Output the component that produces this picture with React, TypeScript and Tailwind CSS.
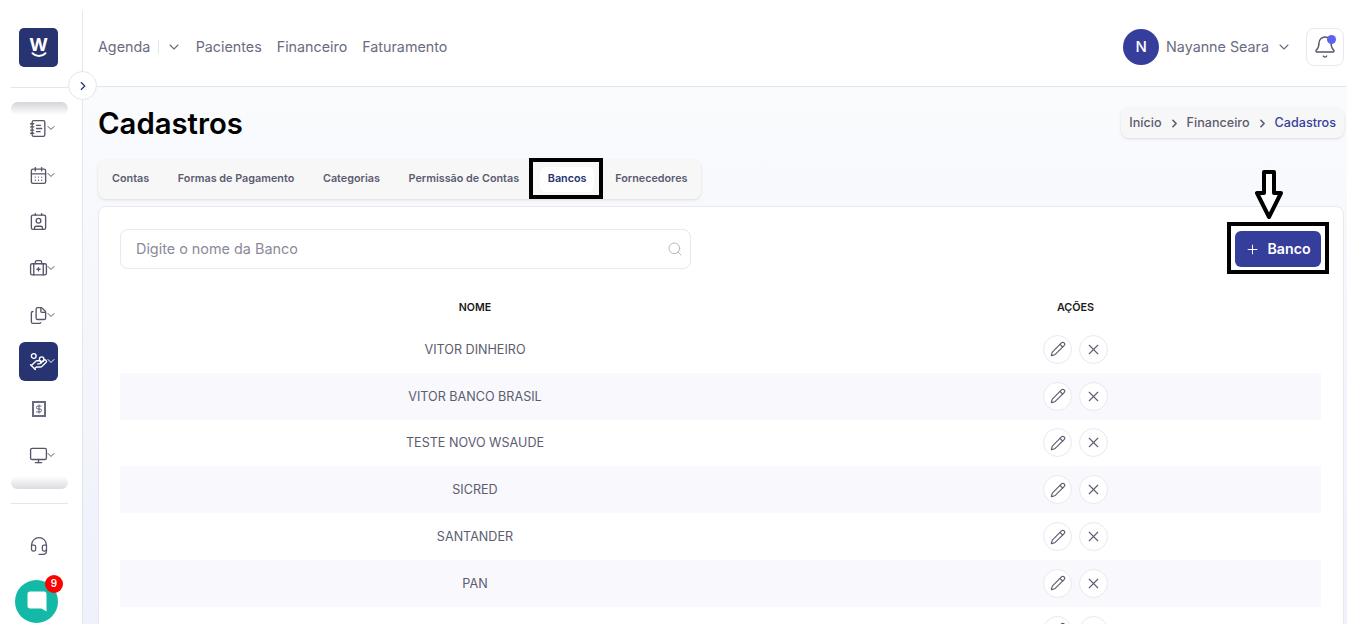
import type { ReactNode } from "react";
import {
  Bell,
  BriefcaseMedical,
  CalendarDays,
  ChevronDown,
  ChevronRight,
  Contact,
  DollarSign,
  Files,
  HandCoins,
  Headset,
  Monitor,
  NotebookText,
  Pencil,
  Plus,
  Search,
  X,
} from "lucide-react";

const tabs = ["Contas", "Formas de Pagamento", "Categorias", "Permissão de Contas", "Bancos", "Fornecedores"];
const banks = ["VITOR DINHEIRO", "VITOR BANCO BRASIL", "TESTE NOVO WSAUDE", "SICRED", "SANTANDER", "PAN", ""];

function NavIcon({ children, caret, active }: { children: ReactNode; caret?: boolean; active?: boolean }) {
  return (
    <div
      className={`relative flex h-[39px] w-[39px] items-center justify-center rounded-[6px] ${
        active ? "bg-[#283372] text-white" : "text-[#56566a]"
      }`}
    >
      {children}
      {caret && <ChevronDown className="absolute top-[13px] left-[26px] h-[12px] w-[12px]" strokeWidth={2} />}
    </div>
  );
}

function Sidebar() {
  const ic = "h-[19px] w-[19px]";
  return (
    <aside className="relative flex h-full w-[83px] shrink-0 flex-col items-center bg-white pr-[6px]">
      <div className="absolute top-[11px] right-0 bottom-0 w-px bg-[#e4e6ef]" />
      <div className="mt-[28px] flex h-[39px] w-[39px] flex-col items-center justify-center rounded-[5px] bg-[#283372] text-white">
        <span className="text-[18px] leading-[14px] font-bold">W</span>
        <svg width="16" height="6" viewBox="0 0 16 6" fill="none">
          <path d="M1.5 1.2C4.5 4.8 11.5 4.8 14.5 1.2" stroke="white" strokeWidth="2" strokeLinecap="round" />
        </svg>
      </div>
      <div className="mt-[20px] ml-px h-px w-[57px] bg-[#e4e6ef]" />
      <div className="mt-[14px] ml-px h-[13px] w-[57px] rounded-[9px] bg-gradient-to-b from-[#d5d5da] to-white" />
      <div className="mt-[-6px] flex flex-col items-center gap-[7.7px]">
        <NavIcon caret><NotebookText className={ic} strokeWidth={1.7} /></NavIcon>
        <NavIcon caret><CalendarDays className={ic} strokeWidth={1.7} /></NavIcon>
        <NavIcon><Contact className={ic} strokeWidth={1.7} /></NavIcon>
        <NavIcon caret><BriefcaseMedical className={ic} strokeWidth={1.7} /></NavIcon>
        <NavIcon caret><Files className={ic} strokeWidth={1.7} /></NavIcon>
        <NavIcon caret active><HandCoins className={ic} strokeWidth={1.7} /></NavIcon>
        <NavIcon>
          <div className="flex h-[16px] w-[14px] items-center justify-center border-2 border-[#6a6a80]">
            <DollarSign className="h-[12px] w-[12px]" strokeWidth={2.2} />
          </div>
        </NavIcon>
        <NavIcon caret><Monitor className={ic} strokeWidth={1.7} /></NavIcon>
      </div>
      <div className="mt-[1px] ml-px h-[13px] w-[57px] rounded-[9px] bg-gradient-to-b from-white to-[#dcdce1]" />
      <div className="mt-[14px] ml-px h-px w-[57px] bg-[#e4e6ef]" />
      <Headset className="mt-[32px] h-[20px] w-[20px] text-[#56566a]" strokeWidth={1.5} />
      <div className="relative mt-[24px] mr-[4px] flex h-[43px] w-[43px] items-center justify-center rounded-full bg-[#14b8a6]">
        <svg width="20" height="21" viewBox="0 0 20 21">
          <path d="M3 0.5H17C18.5 0.5 19.5 1.5 19.5 3V20.5L14.5 17.5H3C1.5 17.5 0.5 16.5 0.5 15V3C0.5 1.5 1.5 0.5 3 0.5Z" fill="white" />
        </svg>
        <span className="absolute -top-[5px] -right-[5px] flex h-[18px] w-[18px] items-center justify-center rounded-full bg-[#fe0000] text-[10px] font-semibold text-white">
          9
        </span>
      </div>
    </aside>
  );
}

function Header() {
  return (
    <header className="flex h-[87px] shrink-0 items-center justify-between border-b border-[#e4e6ef] bg-white pt-[8px] pr-[3px] pl-[15px] text-[14.3px] text-[#6b6b80]">
      <nav className="flex items-center">
        <span className="border-r border-[#e4e6ef] pr-[8px] leading-[14px]">Agenda</span>
        <ChevronDown className="ml-[7px] h-[16px] w-[16px]" strokeWidth={1.6} />
        <span className="ml-[13.5px]">Pacientes</span>
        <span className="ml-[15px]">Financeiro</span>
        <span className="ml-[15px]">Faturamento</span>
      </nav>
      <div className="flex items-center">
        <div className="flex h-[36px] w-[36px] items-center justify-center rounded-full bg-[#363e9c] text-[15px] font-medium text-white">N</div>
        <span className="ml-[7px]">Nayanne Seara</span>
        <ChevronDown className="ml-[7px] h-[16px] w-[16px]" strokeWidth={1.6} />
        <div className="relative ml-[14px] flex h-[38px] w-[38px] items-center justify-center rounded-[8px] border border-[#e8e9f0]">
          <Bell className="h-[24px] w-[24px] text-[#56566a]" strokeWidth={1.4} />
          <span className="absolute top-[6px] right-[7px] h-[9px] w-[9px] rounded-full bg-[#5b63f0]" />
        </div>
      </div>
    </header>
  );
}

function TitleRow() {
  return (
    <div className="mt-[17px] flex items-center justify-between pr-[3px]">
      <h1 className="text-[29.3px] leading-[40px] font-semibold text-black">Cadastros</h1>
      <div className="mb-[2px] flex h-[30px] items-center rounded-[8px] bg-[#f7f7f8] px-[8px] text-[12.6px] font-medium text-[#5c5c70] shadow-[0_1px_3px_rgba(0,0,0,0.12)]">
        <span>Início</span>
        <ChevronRight className="mx-[6px] h-[13px] w-[13px]" strokeWidth={3} />
        <span>Financeiro</span>
        <ChevronRight className="mx-[6px] h-[13px] w-[13px]" strokeWidth={3} />
        <span className="text-[#363e9c]">Cadastros</span>
      </div>
    </div>
  );
}

function Tabs() {
  return (
    <div className="relative mt-[16px] flex h-[39px] w-fit items-center gap-[12.7px] rounded-[8px] bg-[#f7f7f8] px-[6px] shadow-[0_1px_3px_rgba(0,0,0,0.12)]">
      {tabs.map((t) => (
        <div
          key={t}
          className={`flex h-[25px] items-center rounded-[6px] px-[8px] pb-[1px] text-[10.8px] font-semibold ${
            t === "Bancos" ? "bg-white text-[#283372]" : "text-[#5c5c70]"
          }`}
        >
          {t}
        </div>
      ))}
      <div className="absolute top-[-2px] left-[431px] h-[41px] w-[74px] border-[4px] border-black" />
    </div>
  );
}

function Row({ name, striped }: { name: string; striped: boolean }) {
  return (
    <div className={`grid h-[46.8px] grid-cols-[710px_1fr] items-center text-[12.6px] text-[#5c5c70] ${striped ? "bg-[#f8f8fd]" : ""}`}>
      <div className="pt-[1.5px] text-center">{name}</div>
      <div className="flex justify-center gap-[7px]">
        <span className="flex h-[29px] w-[29px] items-center justify-center rounded-full border border-[#e8e9f0] bg-white">
          <Pencil className="h-[16px] w-[16px]" strokeWidth={1.7} />
        </span>
        <span className="flex h-[29px] w-[29px] items-center justify-center rounded-full border border-[#e8e9f0] bg-white">
          <X className="h-[17px] w-[17px]" strokeWidth={1.6} />
        </span>
      </div>
    </div>
  );
}

function Card() {
  return (
    <section className="mt-[7px] mr-[3px] rounded-t-[8px] border border-[#e8e9f0] bg-white pt-[22px] pr-[22px] pl-[21px]">
      <div className="flex items-center justify-between">
        <div className="flex h-[40px] w-[571px] items-center justify-between rounded-[8px] border border-[#e8e9f0] pr-[7px] pl-[15px] text-[14.4px] text-[#8a8a99]">
          <span>Digite o nome da Banco</span>
          <Search className="h-[16px] w-[16px] text-[#b5b5c0]" strokeWidth={1.5} />
        </div>
        <div className="relative flex h-[36px] w-[86px] items-center justify-center gap-[7px] rounded-[6px] bg-[#363e9c] text-[14.2px] font-semibold text-white">
          <Plus className="h-[15px] w-[15px]" strokeWidth={1.6} />
          <span>Banco</span>
          <div className="absolute top-[-9px] left-[-8px] h-[52px] w-[102px] border-[4px] border-black" />
          <svg className="absolute top-[-61px] left-[20px]" width="28" height="51" viewBox="0 0 28 51" fill="none">
            <path d="M9 2H19V23H26L14 47L2 23H9Z" stroke="black" strokeWidth="4" fill="white" strokeLinejoin="round" />
          </svg>
        </div>
      </div>
      <div className="mt-[21px] grid h-[36px] grid-cols-[710px_1fr] leading-[35px] font-semibold text-[#1a1a1a]">
        <div className="text-center text-[10.6px]">NOME</div>
        <div className="text-center text-[10.8px]">AÇÕES</div>
      </div>
      <div>
        {banks.map((b, i) => (
          <Row key={i} name={b} striped={i % 2 === 1} />
        ))}
      </div>
    </section>
  );
}

export default function App() {
  return (
    <div className="relative flex h-[624px] w-[1347px] overflow-hidden bg-white font-['Inter',sans-serif]">
      <Sidebar />
      <div className="flex min-w-0 flex-1 flex-col">
        <Header />
        <main className="flex-1 bg-gradient-to-b from-[#fafbfd] to-[#eef0fb] pl-[15px]">
          <TitleRow />
          <Tabs />
          <Card />
        </main>
      </div>
      <button className="absolute top-[71px] left-[68px] flex h-[29px] w-[29px] items-center justify-center rounded-full border border-[#e4e6ef] bg-white text-[#283372]">
        <ChevronRight className="h-[14px] w-[14px]" strokeWidth={2} />
      </button>
    </div>
  );
}
